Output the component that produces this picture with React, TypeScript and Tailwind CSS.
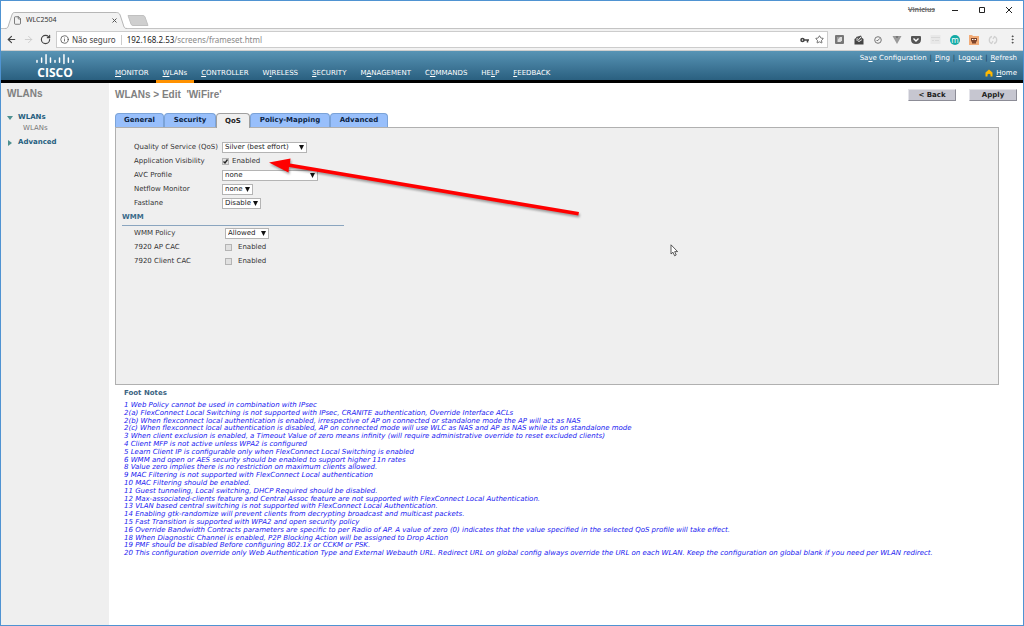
import type { ReactNode } from "react";
import {
  ArrowLeft,
  ArrowRight,
  File,
  Info,
  MoreVertical,
  RotateCw,
  Star,
} from "lucide-react";

const nav = [
  { pre: "", key: "M", post: "ONITOR" },
  { pre: "", key: "W", post: "LANs", active: true },
  { pre: "", key: "C", post: "ONTROLLER" },
  { pre: "W", key: "I", post: "RELESS" },
  { pre: "", key: "S", post: "ECURITY" },
  { pre: "M", key: "A", post: "NAGEMENT" },
  { pre: "C", key: "O", post: "MMANDS" },
  { pre: "HE", key: "L", post: "P" },
  { pre: "", key: "F", post: "EEDBACK" },
];

const tabs = [
  { label: "General", width: "w-[49px]" },
  { label: "Security", width: "w-[52px]" },
  { label: "QoS", width: "w-[34px]", active: true },
  { label: "Policy-Mapping", width: "w-[80px]" },
  { label: "Advanced", width: "w-[58px]" },
];

const notes = [
  "1 Web Policy cannot be used in combination with IPsec",
  "2(a) FlexConnect Local Switching is not supported with IPsec, CRANITE authentication, Override Interface ACLs",
  "2(b) When flexconnect local authentication is enabled, irrespective of AP on connected or standalone mode the AP will act as NAS",
  "2(c) When flexconnect local authentication is disabled, AP on connected mode will use WLC as NAS and AP as NAS while its on standalone mode",
  "3 When client exclusion is enabled, a Timeout Value of zero means infinity (will require administrative override to reset excluded clients)",
  "4 Client MFP is not active unless WPA2 is configured",
  "5 Learn Client IP is configurable only when FlexConnect Local Switching is enabled",
  "6 WMM and open or AES security should be enabled to support higher 11n rates",
  "8 Value zero implies there is no restriction on maximum clients allowed.",
  "9 MAC Filtering is not supported with FlexConnect Local authentication",
  "10 MAC Filtering should be enabled.",
  "11 Guest tunneling, Local switching, DHCP Required should be disabled.",
  "12 Max-associated-clients feature and Central Assoc feature are not supported with FlexConnect Local Authentication.",
  "13 VLAN based central switching is not supported with FlexConnect Local Authentication.",
  "14 Enabling gtk-randomize will prevent clients from decrypting broadcast and multicast packets.",
  "15 Fast Transition is supported with WPA2 and open security policy",
  "16 Override Bandwidth Contracts parameters are specific to per Radio of AP. A value of zero (0) indicates that the value specified in the selected QoS profile will take effect.",
  "18 When Diagnostic Channel is enabled, P2P Blocking Action will be assigned to Drop Action",
  "19 PMF should be disabled Before configuring 802.1x or CCKM or PSK.",
  "20 This configuration override only Web Authentication Type and External Webauth URL. Redirect URL on global config always override the URL on each WLAN. Keep the configuration on global blank if you need per WLAN redirect.",
];

const TabStrip = () => (
  <div className="relative flex h-[28px] items-end border-b border-[#c4c4c4] bg-white">
    <div className="relative -mb-px ml-1 flex h-[17px] w-[122px] items-center px-[8px]">
      <svg className="absolute inset-0 size-full" viewBox="0 0 124 17" preserveAspectRatio="none" aria-hidden="true">
        <path d="M0 16.5 C3 16.5 3 15 4 12 L7 3 C8 1 8 .5 10 .5 H113 C115 .5 116 1 117 3 L120 12 C121 15 121 16.5 124 16.5 V17 H0Z" fill="#f2f2f2" />
        <path d="M0 16.5 C3 16.5 3 15 4 12 L7 3 C8 1 8 .5 10 .5 H113 C115 .5 116 1 117 3 L120 12 C121 15 121 16.5 124 16.5" fill="none" stroke="#b5b5b5" />
      </svg>
      <File className="relative size-[9px] text-[#555]" strokeWidth={2} />
      <span className="relative ml-[4px] flex-1 text-[7px] text-[#333]">WLC2504</span>
      <button aria-label="Close tab" className="relative mr-[2px]">
        <svg className="size-[5px]" viewBox="0 0 5 5" stroke="#555" aria-hidden="true">
          <path d="M.5 .5 4.5 4.5 M4.5 .5 .5 4.5" />
        </svg>
      </button>
    </div>
    <button aria-label="New tab" className="mb-[2px]">
      <svg className="h-[11px] w-[22px]" viewBox="0 0 22 11" aria-hidden="true">
        <path d="M1 .5 H16 Q17.5 .5 18 2 L21 10.5 H6 Q4.5 10.5 4 9Z" fill="#cfcfcf" stroke="#c0c0c0" />
      </svg>
    </button>
    <div className="ml-auto flex items-center self-start pt-1 pr-[10px]">
      <span className="mr-[16px] text-[7px] leading-[9px] font-bold text-[#777] line-through">Vinicius</span>
      <button aria-label="Minimize" className="mr-[19px]">
        <svg className="size-[8px]" viewBox="0 0 8 8" stroke="#222" aria-hidden="true"><path d="M1 4.5H7" /></svg>
      </button>
      <button aria-label="Maximize" className="mr-[19px]">
        <svg className="size-[8px]" viewBox="0 0 8 8" stroke="#222" fill="none" aria-hidden="true"><path d="M1.5 1.5H6.5V6.5H1.5Z" /></svg>
      </button>
      <button aria-label="Close">
        <svg className="size-[8px]" viewBox="0 0 8 8" stroke="#222" aria-hidden="true"><path d="M1 1 7 7 M7 1 1 7" /></svg>
      </button>
    </div>
  </div>
);

const Extensions = () => (
  <div className="flex items-center gap-[9px] pr-[7px] pl-[6px]">
    <svg className="size-[11px]" viewBox="0 0 11 11" aria-hidden="true">
      <rect x="1" y="1" width="9" height="9" rx="1" fill="#777" />
      <path d="M3.5 3H8V6.5L6.5 8H3.5Z" fill="#ddd" />
      <path d="M3.5 6 6 3H3.500Z" fill="#999" />
    </svg>
    <svg className="size-[10px]" viewBox="0 0 10 10" aria-hidden="true">
      <path d="M.5 4 L2 3 V5 L5 7 8 5 V3 L9.5 4 V9.5 H.5Z" fill="#444" />
      <path d="M2 2 L7 .5 L8.5 4 L5 6 2.500 5Z" fill="#555" />
      <path d="M3 3.500 4.500 4.800 7 2" stroke="#eee" fill="none" />
    </svg>
    <svg className="size-[10px]" viewBox="0 0 10 10" fill="none" stroke="#777" aria-hidden="true">
      <circle cx="5" cy="5" r="3.300" />
      <path d="M3.500 5.500H5L6.500 3.500" />
    </svg>
    <svg className="size-[10px]" viewBox="0 0 10 10" aria-hidden="true">
      <path d="M.5 1H3L5 4.500 7 1H9.500L5 9Z" fill="#999" />
      <path d="M3 1H7L5 4.500Z" fill="#777" />
    </svg>
    <svg className="size-[10px]" viewBox="0 0 10 10" aria-hidden="true">
      <path d="M1 1H9Q10 1 10 2V4.500Q10 9 5 9 0 9 0 4.500V2Q0 1 1 1Z" fill="#555" />
      <path d="M2.500 3.500 5 6 7.500 3.500" fill="none" stroke="#fff" strokeWidth="1.400" />
    </svg>
    <svg className="size-[11px]" viewBox="0 0 11 11" aria-hidden="true">
      <rect x=".5" y="1" width="10" height="9" fill="#e8e8e8" />
      <path d="M1 3.500H10 M2 6.500H4 M5 6.500H9" stroke="#d8d8d8" />
    </svg>
    <span className="flex size-[10px] items-center justify-center rounded-full bg-[#13aaa5] text-[8px] leading-none text-white">
      m
    </span>
    <svg className="size-[10px]" viewBox="0 0 10 10" aria-hidden="true">
      <path d="M0 0H3L4 1H10V10H0Z" fill="#f2ac78" />
      <path d="M2 3H8V6L7 7V8.500H3V7L2 6Z" fill="#7d452c" />
      <path d="M3 4.500H4.500 M5.500 4.500H7" stroke="#fff" />
    </svg>
    <svg className="size-[10px]" viewBox="0 0 10 10" fill="none" stroke="#d0d0d0" strokeWidth="1.300" aria-hidden="true">
      <path d="M4 1.500C1 2 0 7 3.500 8.500L5 6 M6 8.500C9 8 10 3 6.500 1.500L5 4" />
    </svg>
    <button aria-label="Menu" className="-mr-[2px]">
      <MoreVertical className="size-[11px] text-[#444]" strokeWidth={2} />
    </button>
  </div>
);

const Toolbar = () => (
  <div className="flex h-[22px] items-center border-b border-[#cfcfcf] bg-[#f2f2f2]">
    <div className="flex items-center gap-[6px] pl-[5px] text-[#444]">
      <button aria-label="Back"><ArrowLeft className="size-[11px]" strokeWidth={2.5} /></button>
      <button aria-label="Forward" className="text-[#ccc]"><ArrowRight className="size-[11px]" strokeWidth={2} /></button>
      <button aria-label="Reload"><RotateCw className="size-[11px]" strokeWidth={2.5} /></button>
    </div>
    <div className="ml-[5px] flex h-[17px] flex-1 items-center border border-[#ccc] bg-white px-[3px]">
      <Info className="size-[9px] text-[#444]" />
      <span className="ml-[3px] text-[8px] text-[#444]">Não seguro</span>
      <span className="mx-[5px] h-[10px] w-px bg-[#ccc]" />
      <span className="flex-1 text-[8px] text-[#888]">
        <span className="text-[#222]">192.168.2.53</span>/screens/frameset.html
      </span>
      <svg className="mr-[6px] h-[6px] w-[9px]" viewBox="0 0 9 6" fill="none" stroke="#444" aria-hidden="true">
        <circle cx="2.500" cy="3" r="1.500" strokeWidth="1.600" />
        <path d="M4 3H9 M7.500 3V5.500" strokeWidth="1.500" />
      </svg>
      <button aria-label="Bookmark"><Star className="size-[9px] text-[#444]" strokeWidth={2} /></button>
    </div>
    <Extensions />
  </div>
);

const CiscoLogo = () => (
  <div className="flex w-[108px] shrink-0 flex-col items-center pt-[2px] text-white">
    <svg className="h-[13px] w-[42px]" viewBox="0 0 42 13" stroke="#fff" strokeWidth="1.600" strokeLinecap="round" aria-hidden="true">
      <path d="M1.500 8V10 M6.500 5.500V10 M11.300 2V11.500 M16.100 5.500V10 M21 8V10 M25.900 5.500V10 M30.700 2V11.500 M35.500 5.500V10 M40.500 8V10" />
    </svg>
    <span className="font-['Open_Sans',sans-serif] text-[12px] leading-[15px] font-bold">CISCO</span>
  </div>
);

const Header = () => (
  <header className="flex h-[32px] border-b-[3px] border-black bg-linear-to-b from-[#5894b5] to-[#2a6080] bg-clip-padding text-[7px] leading-[10px] text-white">
    <CiscoLogo />
    <nav className="-ml-px flex flex-1 items-stretch">
      {nav.map((item) => (
        <a
          key={item.post}
          href="#"
          className={
            item.active
              ? "relative flex items-end px-[7px] pb-[2px] after:absolute after:inset-x-0 after:-bottom-[3px] after:h-[3px] after:bg-[#ff9100]"
              : "flex items-end px-[7px] pb-[2px]"
          }
        >
          <span>
            {item.pre}
            <u>{item.key}</u>
            {item.post}
          </span>
        </a>
      ))}
    </nav>
    <div className="flex flex-col items-end justify-between pt-[2px] pr-[6px] pb-[2px]">
      <div className="flex gap-[3px]">
        <a href="#">Sa<u>v</u>e Configuration</a>
        <span className="text-[#163f58]">|</span>
        <a href="#"><u>P</u>ing</a>
        <span className="text-[#163f58]">|</span>
        <a href="#">Lo<u>g</u>out</a>
        <span className="text-[#163f58]">|</span>
        <a href="#"><u>R</u>efresh</a>
      </div>
      <a href="#" className="flex items-center gap-[3px]">
        <svg className="size-[8px]" viewBox="0 0 8 8" aria-hidden="true">
          <path d="M4 0.500 7.500 3.500V7.500H5.500V5.500Q4 4 2.500 5.500V7.500H.5V3.500Z" fill="#ffb900" />
        </svg>
        <span><u>H</u>ome</span>
      </a>
    </div>
  </header>
);

const Sidebar = () => (
  <aside className="w-[108px] shrink-0 bg-[#efefef] px-[6px] pt-[5px]">
    <h2 className="font-['Liberation_Sans',sans-serif] text-[10px] leading-[12px] font-bold text-[#808080]">WLANs</h2>
    <ul className="mt-[12px] text-[7px] leading-[11px] text-[#26607f]">
      <li>
        <a href="#" className="flex items-center gap-[5px] font-bold">
          <svg className="size-[6px]" viewBox="0 0 6 6" aria-hidden="true"><path d="M0 1H6L3 5Z" fill="#4d9090" /></svg>
          WLANs
        </a>
        <a href="#" className="ml-4 block leading-[10px] text-[#777]">WLANs</a>
      </li>
      <li className="mt-[4px]">
        <a href="#" className="flex items-center gap-[5px] font-bold">
          <svg className="size-[6px]" viewBox="0 0 6 6" aria-hidden="true"><path d="M1 0V6L5 3Z" fill="#4d9090" /></svg>
          Advanced
        </a>
      </li>
    </ul>
  </aside>
);

const Select = ({ id, value, width }: { id: string; value: string; width: string }) => (
  <div className={`relative h-[11px] ${width}`}>
    <select
      id={id}
      className="block h-full w-full appearance-none border border-[#b4b4b4] bg-white pl-[2px] text-[7px] leading-[9px] text-[#222]"
    >
      <option>{value}</option>
    </select>
    <svg className="pointer-events-none absolute top-[3px] right-[3px] h-[5px] w-[5px]" viewBox="0 0 5 5" aria-hidden="true">
      <path d="M0 0H5L2.500 5Z" fill="#111" />
    </svg>
  </div>
);

const Row = ({ id, label, labelWidth, children }: { id: string; label: string; labelWidth: string; children: ReactNode }) => (
  <div className="flex h-[14px] items-center">
    <label htmlFor={id} className={labelWidth}>{label}</label>
    {children}
  </div>
);

const Check = ({ id, checked, gap }: { id: string; checked?: boolean; gap: string }) => (
  <div className={`flex items-center ${gap}`}>
    <span className="relative block size-[7px]">
      <input
        id={id}
        type="checkbox"
        defaultChecked={checked}
        className="peer block size-[7px] appearance-none border border-[#b4b4b4] bg-[#e0e0e0]"
      />
      <svg className="pointer-events-none absolute inset-0 hidden size-[7px] peer-checked:block" viewBox="0 0 7 7" fill="none" stroke="#222" strokeWidth="1.300" aria-hidden="true">
        <path d="M1.500 3.500 3 5 5.500 1.500" />
      </svg>
    </span>
    <label htmlFor={id}>Enabled</label>
  </div>
);

const Arrow = () => (
  <svg className="pointer-events-none absolute top-[27px] left-[149px] h-[64px] w-[320px] drop-shadow-[1px_2px_1px_rgba(0,0,0,0.35)]" viewBox="0 0 320 64" aria-hidden="true">
    <path d="M4 7.500 25.500 3.500 25 8.500 314 57 313.300 60.600 24 12 23.500 17.500Z" fill="#ff0000" />
  </svg>
);

const Pointer = () => (
  <svg className="pointer-events-none absolute top-[116px] left-[554px] h-[13px] w-[9px]" viewBox="0 0 9 13" aria-hidden="true">
    <path d="M1 .8V10L3 8.200 4.600 11.800 6.200 11 4.700 7.600H7.600Z" fill="#fff" stroke="#333" strokeWidth=".8" />
  </svg>
);

const QosPanel = () => (
  <section className="relative mr-[24px] min-h-[258px] border border-[#b0b0b0] bg-[#efefef] pt-3 text-[7px] leading-[10px] text-[#333]">
    <div className="pl-[18px]">
      <Row id="qos" label="Quality of Service (QoS)" labelWidth="w-[88px]">
        <Select id="qos" value="Silver (best effort)" width="w-[85px]" />
      </Row>
      <Row id="visibility" label="Application Visibility" labelWidth="w-[88px]">
        <Check id="visibility" checked gap="gap-[3px]" />
      </Row>
      <Row id="avc" label="AVC Profile" labelWidth="w-[88px]">
        <Select id="avc" value="none" width="w-[96px]" />
      </Row>
      <Row id="netflow" label="Netflow Monitor" labelWidth="w-[88px]">
        <Select id="netflow" value="none" width="w-[31px]" />
      </Row>
      <Row id="fastlane" label="Fastlane" labelWidth="w-[88px]">
        <Select id="fastlane" value="Disable" width="w-[39px]" />
      </Row>
    </div>
    <h3 className="ml-[6px] h-[16px] w-[222px] border-b border-[#8aa5bf] pt-[2px] font-bold text-[#39698a]">WMM</h3>
    <div className="pl-[18px]">
      <Row id="wmm" label="WMM Policy" labelWidth="w-[91px]">
        <Select id="wmm" value="Allowed" width="w-[44px]" />
      </Row>
      <Row id="apcac" label="7920 AP CAC" labelWidth="w-[91px]">
        <Check id="apcac" gap="gap-[6px]" />
      </Row>
      <Row id="clientcac" label="7920 Client CAC" labelWidth="w-[91px]">
        <Check id="clientcac" gap="gap-[6px]" />
      </Row>
    </div>
    <Arrow />
    <Pointer />
  </section>
);

const ActionButton = ({ children }: { children: ReactNode }) => (
  <button className="h-[12px] w-[48px] border border-t-[#e4e4ea] border-r-[#8c8c96] border-b-[#8c8c96] border-l-[#e4e4ea] bg-[#c6c6d0] text-[7px] leading-[9px] font-bold text-[#222]">
    {children}
  </button>
);

const App = () => {
  return (
    <div className="flex min-h-screen flex-col border border-[#4f93d2] bg-white font-['DejaVu_Sans',Verdana,sans-serif]">
      <div className="font-['Noto_Sans',sans-serif]">
        <TabStrip />
        <Toolbar />
      </div>
      <Header />
      <div className="flex flex-1">
        <Sidebar />
        <main className="min-w-0 flex-1 pl-[6px]">
          <div className="flex items-start justify-between pt-[6px] pr-[6px]">
            <h1 className="font-['Liberation_Sans',sans-serif] text-[10px] leading-[12px] font-bold whitespace-pre text-[#808080]">
              {"WLANs > Edit  'WiFire'"}
            </h1>
            <div className="flex gap-[13px]">
              <ActionButton>&lt; Back</ActionButton>
              <ActionButton>Apply</ActionButton>
            </div>
          </div>
          <div className="mt-[12px] flex items-end text-[7px] leading-[13px] font-bold" role="tablist">
            {tabs.map((tab) => (
              <button
                key={tab.label}
                role="tab"
                aria-selected={!!tab.active}
                className={
                  tab.active
                    ? `relative z-10 -mb-px h-[15px] rounded-t-[4px] border border-b-0 border-[#a0a0a0] bg-[#efefef] text-[#222] ${tab.width}`
                    : `h-[14px] rounded-t-[4px] border border-b-0 border-[#7ba3d8] bg-[#98bffb] text-[#0c1f44] ${tab.width}`
                }
              >
                {tab.label}
              </button>
            ))}
          </div>
          <QosPanel />
          <section className="pl-[9px] text-[7px]">
            <h3 className="pt-[3px] leading-[10px] font-bold text-[#3c6482]">Foot Notes</h3>
            <ul className="mt-[4px] grid min-h-[156px] auto-rows-fr leading-[7px] whitespace-nowrap text-[#2020f0] italic">
              {notes.map((note) => (
                <li key={note}>{note}</li>
              ))}
            </ul>
          </section>
        </main>
      </div>
    </div>
  );
};

export default App;
